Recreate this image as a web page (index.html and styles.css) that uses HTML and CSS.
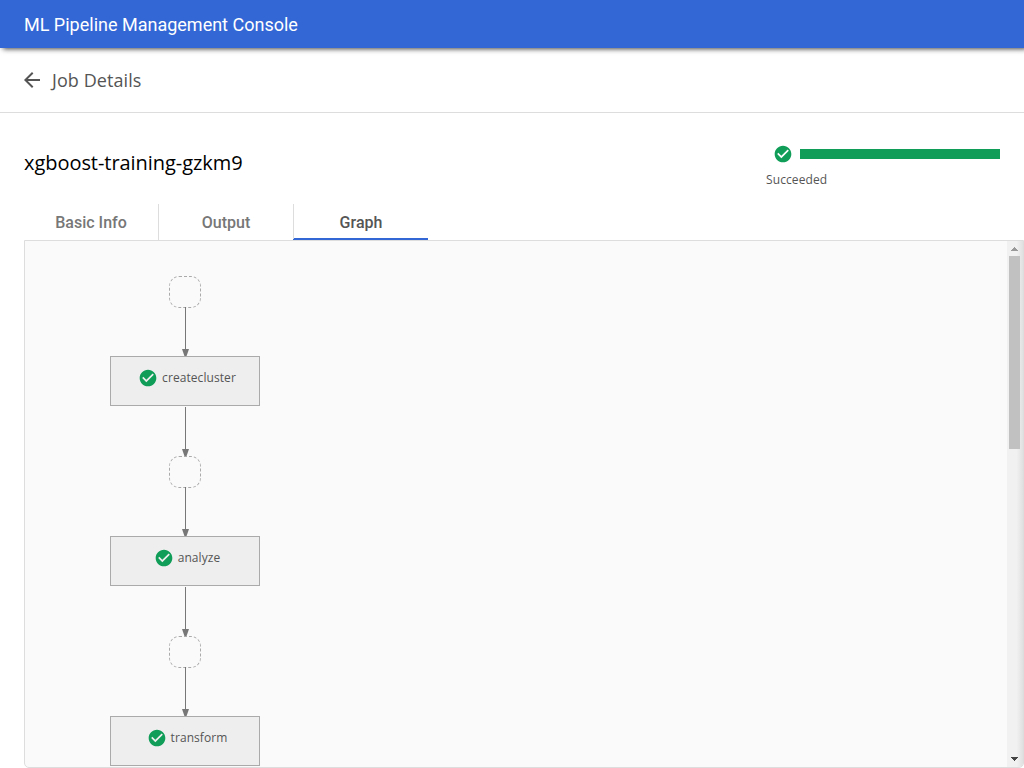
FILE: index.html
```html
<!DOCTYPE html>
<html lang="en">
<head>
<meta charset="utf-8">
<title>ML Pipeline Management Console</title>
<link rel="stylesheet" href="styles.css">
</head>
<body>
<svg class="defs" aria-hidden="true">
  <symbol id="check" viewBox="0 0 24 24"><path d="M12 2C6.48 2 2 6.48 2 12s4.48 10 10 10 10-4.48 10-10S17.52 2 12 2zm-2 15l-5-5 1.41-1.41L10 14.17l7.59-7.59L19 8l-9 9z"/></symbol>
</svg>
<header class="topbar">ML Pipeline Management Console</header>
<nav class="toolbar">
  <svg class="back" viewBox="0 0 24 24"><path d="M20 11H7.83l5.59-5.59L12 4l-8 8 8 8 1.41-1.41L7.83 13H20v-2z"/></svg>
  <span>Job Details</span>
</nav>
<main class="page">
  <section class="job">
    <h1 class="job-name">xgboost-training-gzkm9</h1>
    <div class="status">
      <div class="status-row"><svg class="check"><use href="#check"/></svg><div class="progress"></div></div>
      <div class="status-text">Succeeded</div>
    </div>
  </section>
  <div class="tabs">
    <div class="tab">Basic Info</div>
    <div class="tab">Output</div>
    <div class="tab active">Graph</div>
  </div>
  <section class="panel">
    <div class="canvas">
      <div class="dot n1"></div>
      <div class="node n2"><svg class="check"><use href="#check"/></svg><span>createcluster</span></div>
      <div class="dot n3"></div>
      <div class="node n4"><svg class="check"><use href="#check"/></svg><span>analyze</span></div>
      <div class="dot n5"></div>
      <div class="node n6"><svg class="check"><use href="#check"/></svg><span>transform</span></div>
      <div class="edge e1"></div>
      <div class="edge e2"></div>
      <div class="edge e3"></div>
      <div class="edge e4"></div>
      <div class="edge e5"></div>
    </div>
    <div class="scrollbar">
      <svg class="arrow up" viewBox="0 0 7 4" shape-rendering="crispEdges"><path d="M3 0h1v1h1v1h1v1h1v1H0V3h1V2h1V1h1z"/></svg>
      <div class="thumb"></div>
      <svg class="arrow down" viewBox="0 0 7 4" shape-rendering="crispEdges"><path d="M0 0h7v1H6v1H5v1H4v1H3V3H2V2H1V1H0z"/></svg>
    </div>
  </section>
</main>
</body>
</html>
```
FILE: styles.css
```css
* { box-sizing: border-box; }
body {
  margin: 0;
  height: 768px;
  overflow: hidden;
  display: flex;
  flex-direction: column;
  background: #fff;
  color: #000;
  font-family: "Open Sans", sans-serif;
}
.defs { display: none; }
.topbar {
  flex: none;
  height: 48px;
  padding: 0 24px;
  background: #3367d6;
  color: #fff;
  font: 18px/49px Roboto, sans-serif;
  box-shadow: 3px 1px 5px #444;
}
.toolbar {
  flex: none;
  height: 65px;
  padding: 0 22px;
  display: flex;
  align-items: center;
  border-bottom: 1px solid #ddd;
  color: #555;
  font-size: 18px;
  letter-spacing: 0.08px;
}
.back { width: 20px; height: 20px; margin-right: 10px; fill: #555; transform: scale(1.2); }
.page { flex: 1; min-height: 0; padding-left: 24px; display: flex; flex-direction: column; }
.job {
  flex: none;
  height: 91px;
  padding: 31px 24px 0 0;
  display: flex;
  justify-content: space-between;
}
.job-name { margin: 4px 0 0; font-size: 20px; font-weight: 400; line-height: 30px; letter-spacing: -0.05px; }
.status { width: 234px; }
.status-row { display: flex; align-items: center; justify-content: flex-end; height: 20px; }
.check { flex: none; width: 20px; height: 20px; fill: #0f9d58; }
.progress { width: 200px; height: 10px; margin-left: 7px; background: #0f9d58; }
.status-text { margin-top: 7px; color: #555; font-size: 12px; line-height: 18px; letter-spacing: 0.1px; }
.tabs { flex: none; display: flex; height: 36px; }
.tab {
  width: 135px;
  border-right: 1px solid #ddd;
  text-align: center;
  color: #777;
  font: 500 16px/37px Roboto, sans-serif;
}
.tab:nth-child(2) { width: 134px; border-right: 0; }
.tab.active {
  border-left: 1px solid #ddd;
  border-right: 0;
  color: #555;
  background: linear-gradient(#3367d6, #3367d6) bottom / 100% 2px no-repeat border-box;
  border-image: linear-gradient(#ddd 34px, #3367d6 34px) 1;
}
.panel {
  flex: 1;
  display: flex;
  overflow: hidden;
  border: 1px solid #ddd;
  border-radius: 0 0 5px 5px;
  background: #fafafa;
}
.canvas { position: relative; flex: 1; overflow: hidden; }
.node, .dot, .edge { position: absolute; }
.node {
  left: 85px;
  width: 150px;
  height: 50px;
  padding: 0 0 6px 4px;
  display: flex;
  align-items: center;
  justify-content: center;
  gap: 4px;
  border: 1px solid #aaa;
  background: #eee;
  color: #555;
  font-size: 12px;
  letter-spacing: 0.07px;
}
.node span { padding-bottom: 2px; }
.dot { left: 144px; width: 32px; height: 32px; border: 1px dashed #aaa; border-radius: 10px; }
.n1 { top: 35px; }
.n2 { top: 115px; }
.n3 { top: 215px; }
.n4 { top: 295px; }
.n5 { top: 395px; }
.n6 { top: 475px; }
.edge { left: 160px; width: 1px; height: 49px; background: #777; }
.edge::after {
  content: "";
  position: absolute;
  left: -3px;
  bottom: 0;
  width: 7px;
  height: 7px;
  background: #777;
  clip-path: polygon(0 0, 100% 0, 65% 100%, 35% 100%);
}
.e1 { top: 66px; }
.e2 { top: 166px; }
.e3 { top: 246px; }
.e4 { top: 346px; }
.e5 { top: 426px; }
.scrollbar {
  width: 16px;
  padding: 6px 2px 6px 0;
  display: flex;
  flex-direction: column;
  align-items: center;
  background: linear-gradient(90deg, #f1f1f1 60%, #e0e0e0);
}
.arrow { width: 7px; height: 4px; flex: none; margin-left: 1px; fill: #999; }
.down { margin-top: auto; fill: #444; }
.thumb { width: 11px; height: 193px; margin: 5px 0 0 1px; background: #c1c1c1; }
```
